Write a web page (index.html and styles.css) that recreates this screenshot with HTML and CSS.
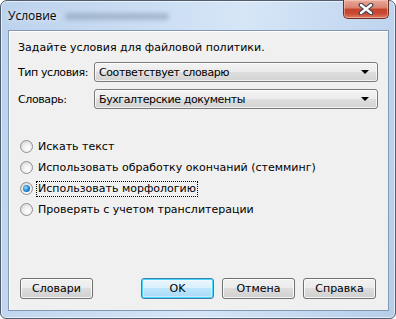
FILE: index.html
```html
<!DOCTYPE html>
<html lang="ru">
<head>
    <meta charset="UTF-8">
    <title>Условие</title>
    <link rel="stylesheet" href="styles.css">
</head>
<body>
    <div class="window">
        <div class="titlebar">
            <span class="title">Условие</span>
            <span class="title-blur"></span>
            <div class="close-btn">
                <svg width="16" height="12" viewBox="0 0 16 12">
                    <path d="M3 2 L13 10 M13 2 L3 10" stroke="#3b4350" stroke-width="4.6" stroke-linecap="round"/>
                    <path d="M3 2 L13 10 M13 2 L3 10" stroke="#ffffff" stroke-width="2.4" stroke-linecap="round"/>
                </svg>
            </div>
        </div>

        <div class="client">
            <p class="intro">Задайте условия для файловой политики.</p>

            <div class="field-row">
                <label class="field-label">Тип условия:</label>
                <div class="combo">
                    <span>Соответствует словарю</span>
                    <span class="combo-arrow"></span>
                </div>
            </div>
            <div class="field-row">
                <label class="field-label">Словарь:</label>
                <div class="combo">
                    <span>Бухгалтерские документы</span>
                    <span class="combo-arrow"></span>
                </div>
            </div>

            <div class="radio-list">
                <div class="radio-row">
                    <span class="radio"></span>
                    <span class="radio-text">Искать текст</span>
                </div>
                <div class="radio-row">
                    <span class="radio"></span>
                    <span class="radio-text">Использовать обработку окончаний (стемминг)</span>
                </div>
                <div class="radio-row">
                    <span class="radio checked"></span>
                    <span class="radio-text focused">Использовать морфологию</span>
                </div>
                <div class="radio-row">
                    <span class="radio"></span>
                    <span class="radio-text">Проверять с учетом транслитерации</span>
                </div>
            </div>

            <div class="button-row">
                <button class="btn">Словари</button>
                <div class="spacer"></div>
                <button class="btn default">OK</button>
                <button class="btn">Отмена</button>
                <button class="btn">Справка</button>
            </div>
        </div>
    </div>
</body>
</html>
```

FILE: styles.css
```css
html, body {
    margin: 0;
    padding: 0;
    background: #ffffff;
}

body {
    font-family: "DejaVu Sans", Verdana, sans-serif;
    font-size: 11px;
    color: #000;
}

.window {
    width: 396px;
    height: 319px;
    box-sizing: border-box;
    border: 1px solid #4f5d6e;
    border-radius: 7px 7px 6px 6px;
    background: linear-gradient(100deg, #bcd2ec 0%, #c9dcf2 30%, #d6e6f7 55%, #c4d8f0 80%, #b6cde9 100%);
    padding: 0 6px 7px 7px;
    display: flex;
    flex-direction: column;
    box-shadow: inset 0 0 0 1px rgba(255, 255, 255, 0.6);
}

.titlebar {
    height: 29px;
    display: flex;
    align-items: flex-start;
    flex-shrink: 0;
}

.title {
    font-family: "Open Sans", "Noto Sans", sans-serif;
    font-size: 12px;
    color: #000;
    margin-top: 7px;
    line-height: 16px;
    text-shadow: 0 0 6px rgba(255, 255, 255, 0.9);
}

.title-blur {
    width: 104px;
    height: 7px;
    margin: 12px 0 0 8px;
    background: rgba(120, 140, 165, 0.45);
    border-radius: 4px;
    filter: blur(2px);
}

.close-btn {
    margin-left: auto;
    margin-top: -1px;
    width: 46px;
    height: 19px;
    box-sizing: border-box;
    border: 1px solid #6b3026;
    border-top: none;
    border-radius: 0 0 5px 5px;
    background: linear-gradient(#e9a99a 0%, #d9826f 45%, #c5432c 50%, #c94a33 75%, #e07e62 100%);
    box-shadow: inset 0 0 0 1px rgba(255, 220, 210, 0.45);
    display: flex;
    align-items: center;
    justify-content: center;
}

.client {
    flex: 1;
    background: #f0f0f0;
    border: 1px solid #8298b2;
    box-shadow: inset 1px 1px 0 #ffffff;
    display: flex;
    flex-direction: column;
    padding: 0 10px 11px 9px;
}

.intro {
    margin: 10px 0 0 0;
    line-height: 14px;
}

.field-row {
    display: flex;
    align-items: center;
    height: 20px;
    margin-top: 7px;
    letter-spacing: -0.4px;
}

.field-label {
    width: 76px;
    flex-shrink: 0;
}

.combo {
    flex: 1;
    height: 20px;
    box-sizing: border-box;
    border: 1px solid #7a7a7a;
    border-radius: 3px;
    background: linear-gradient(#f3f3f3 0%, #ebebeb 50%, #dedede 51%, #d3d3d3 100%);
    box-shadow: inset 0 0 0 1px rgba(255, 255, 255, 0.7);
    display: flex;
    align-items: center;
    padding: 0 8px 0 4px;
}

.combo span:first-child {
    flex: 1;
}

.combo-arrow {
    width: 0;
    height: 0;
    border-left: 4px solid transparent;
    border-right: 4px solid transparent;
    border-top: 4px solid #000;
}

.radio-list {
    margin-top: 27px;
    display: flex;
    flex-direction: column;
}

.radio-row {
    display: flex;
    align-items: center;
    height: 21px;
    padding-left: 2px;
}

.radio {
    width: 13px;
    height: 13px;
    box-sizing: border-box;
    border-radius: 50%;
    border: 1px solid #8f8f8f;
    background: radial-gradient(circle at 60% 65%, #ffffff 0%, #f0f0f0 40%, #cfcfcf 100%);
    margin-right: 3px;
    display: flex;
    align-items: center;
    justify-content: center;
}

.radio.checked::after {
    content: "";
    width: 7px;
    height: 7px;
    border-radius: 50%;
    background: radial-gradient(circle at 40% 40%, #9be3ff 0%, #2d8fd8 45%, #0b3f8f 100%);
}

.radio-text {
    padding: 1px 1px;
    line-height: 12px;
    border: 1px solid transparent;
}

.radio-text.focused {
    border: 1px dotted #000;
}

.button-row {
    margin-top: auto;
    display: flex;
    gap: 8px;
    padding: 0 2px 0 2px;
}

.spacer {
    flex: 1;
}

.btn {
    width: 73px;
    height: 21px;
    box-sizing: border-box;
    border: 1px solid #707070;
    border-radius: 3px;
    background: linear-gradient(#f2f2f2 0%, #ebebeb 48%, #dddddd 50%, #cfcfcf 100%);
    box-shadow: inset 0 0 0 1px rgba(255, 255, 255, 0.8);
    font-family: "DejaVu Sans", Verdana, sans-serif;
    font-size: 11px;
    color: #000;
    padding: 0;
}

.btn.default {
    border-color: #3c7fb1;
    background: linear-gradient(#eaf6fd 0%, #d9f0fc 48%, #bee6fd 50%, #a7d9f5 100%);
    box-shadow: inset 0 0 0 1px #48d8fb, inset 0 0 0 2px rgba(255, 255, 255, 0.4);
}
```
